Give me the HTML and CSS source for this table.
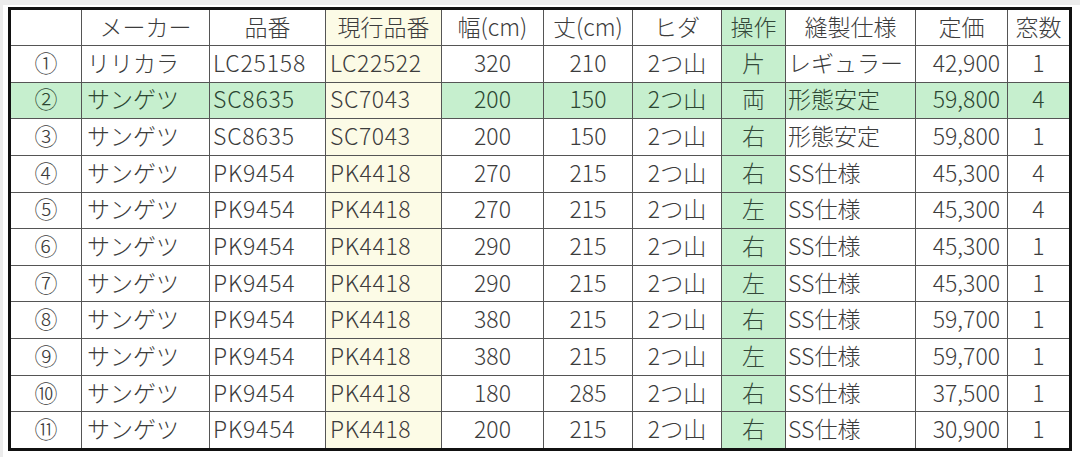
FILE: index.html
```html
<!DOCTYPE html>
<html lang="ja">
<head>
<meta charset="utf-8">
<title>カーテン一覧</title>
<link rel="stylesheet" href="styles.css">
</head>
<body>
<div class="sheet">
  <div class="grid">
    <div class="cell c"></div><div class="cell c">メーカー</div><div class="cell c">品番</div><div class="cell c cream">現行品番</div><div class="cell c">幅(cm)</div><div class="cell c">丈(cm)</div><div class="cell c">ヒダ</div><div class="cell c op">操作</div><div class="cell c">縫製仕様</div><div class="cell c">定価</div><div class="cell c">窓数</div>

    <div class="cell c">①</div><div class="cell l maker">リリカラ</div><div class="cell l code">LC25158</div><div class="cell l cream cur">LC22522</div><div class="cell c">320</div><div class="cell c">210</div><div class="cell c">2つ山</div><div class="cell c op">片</div><div class="cell l spec">レギュラー</div><div class="cell r">42,900</div><div class="cell c">1</div>

    <div class="cell c hl">②</div><div class="cell l maker hl">サンゲツ</div><div class="cell l code hl">SC8635</div><div class="cell l cream cur">SC7043</div><div class="cell c hl">200</div><div class="cell c hl">150</div><div class="cell c hl">2つ山</div><div class="cell c op">両</div><div class="cell l spec hl">形態安定</div><div class="cell r hl">59,800</div><div class="cell c hl">4</div>

    <div class="cell c">③</div><div class="cell l maker">サンゲツ</div><div class="cell l code">SC8635</div><div class="cell l cream cur">SC7043</div><div class="cell c">200</div><div class="cell c">150</div><div class="cell c">2つ山</div><div class="cell c op">右</div><div class="cell l spec">形態安定</div><div class="cell r">59,800</div><div class="cell c">1</div>

    <div class="cell c">④</div><div class="cell l maker">サンゲツ</div><div class="cell l code">PK9454</div><div class="cell l cream cur">PK4418</div><div class="cell c">270</div><div class="cell c">215</div><div class="cell c">2つ山</div><div class="cell c op">右</div><div class="cell l spec">SS仕様</div><div class="cell r">45,300</div><div class="cell c">4</div>

    <div class="cell c">⑤</div><div class="cell l maker">サンゲツ</div><div class="cell l code">PK9454</div><div class="cell l cream cur">PK4418</div><div class="cell c">270</div><div class="cell c">215</div><div class="cell c">2つ山</div><div class="cell c op">左</div><div class="cell l spec">SS仕様</div><div class="cell r">45,300</div><div class="cell c">4</div>

    <div class="cell c">⑥</div><div class="cell l maker">サンゲツ</div><div class="cell l code">PK9454</div><div class="cell l cream cur">PK4418</div><div class="cell c">290</div><div class="cell c">215</div><div class="cell c">2つ山</div><div class="cell c op">右</div><div class="cell l spec">SS仕様</div><div class="cell r">45,300</div><div class="cell c">1</div>

    <div class="cell c">⑦</div><div class="cell l maker">サンゲツ</div><div class="cell l code">PK9454</div><div class="cell l cream cur">PK4418</div><div class="cell c">290</div><div class="cell c">215</div><div class="cell c">2つ山</div><div class="cell c op">左</div><div class="cell l spec">SS仕様</div><div class="cell r">45,300</div><div class="cell c">1</div>

    <div class="cell c">⑧</div><div class="cell l maker">サンゲツ</div><div class="cell l code">PK9454</div><div class="cell l cream cur">PK4418</div><div class="cell c">380</div><div class="cell c">215</div><div class="cell c">2つ山</div><div class="cell c op">右</div><div class="cell l spec">SS仕様</div><div class="cell r">59,700</div><div class="cell c">1</div>

    <div class="cell c">⑨</div><div class="cell l maker">サンゲツ</div><div class="cell l code">PK9454</div><div class="cell l cream cur">PK4418</div><div class="cell c">380</div><div class="cell c">215</div><div class="cell c">2つ山</div><div class="cell c op">左</div><div class="cell l spec">SS仕様</div><div class="cell r">59,700</div><div class="cell c">1</div>

    <div class="cell c">⑩</div><div class="cell l maker">サンゲツ</div><div class="cell l code">PK9454</div><div class="cell l cream cur">PK4418</div><div class="cell c">180</div><div class="cell c">285</div><div class="cell c">2つ山</div><div class="cell c op">右</div><div class="cell l spec">SS仕様</div><div class="cell r">37,500</div><div class="cell c">1</div>

    <div class="cell c">⑪</div><div class="cell l maker">サンゲツ</div><div class="cell l code">PK9454</div><div class="cell l cream cur">PK4418</div><div class="cell c">200</div><div class="cell c">215</div><div class="cell c">2つ山</div><div class="cell c op">右</div><div class="cell l spec">SS仕様</div><div class="cell r">30,900</div><div class="cell c">1</div>
  </div>
</div>
</body>
</html>
```

FILE: styles.css
```css
html {
  background: #ececec;
  height: 100%;
}

body {
  margin: 5px 0 0 3px;
  background: #ffffff;
  min-height: calc(100% - 5px);
  font-family: "Noto Sans CJK JP", "Noto Sans", sans-serif;
}

.sheet {
  padding: 2px 0 0 5px;
}

.grid {
  box-sizing: border-box;
  width: 1064px;
  height: 444px;
  border: 3px solid #111111;
  background: #555555;
  display: grid;
  grid-template-columns: 70px 127px 115px 115px 101px 88px 88px 63px 129px 91px 61px;
  grid-template-rows: 35px repeat(11, 1fr);
  gap: 1px;
}

.cell {
  background: #ffffff;
  color: #3c3c3c;
  font-size: 23px;
  font-weight: 300;
  line-height: 1;
  display: flex;
  align-items: center;
  white-space: nowrap;
  overflow: hidden;
  padding: 0 4px 3px;
}

.c { justify-content: center; }
.l { justify-content: flex-start; }
.r { justify-content: flex-end; padding-right: 7px; }

.maker { padding-left: 5px; }
.code { padding-left: 3px; letter-spacing: 0.8px; }
.cur { padding-left: 4px; letter-spacing: 0.6px; }
.spec { padding-left: 2px; }

.cream { background: #fcfbe6; }

.op {
  background: #c6efce;
  color: #34493a;
}

.hl {
  background: #c6efce;
  color: #2c4632;
}
```
